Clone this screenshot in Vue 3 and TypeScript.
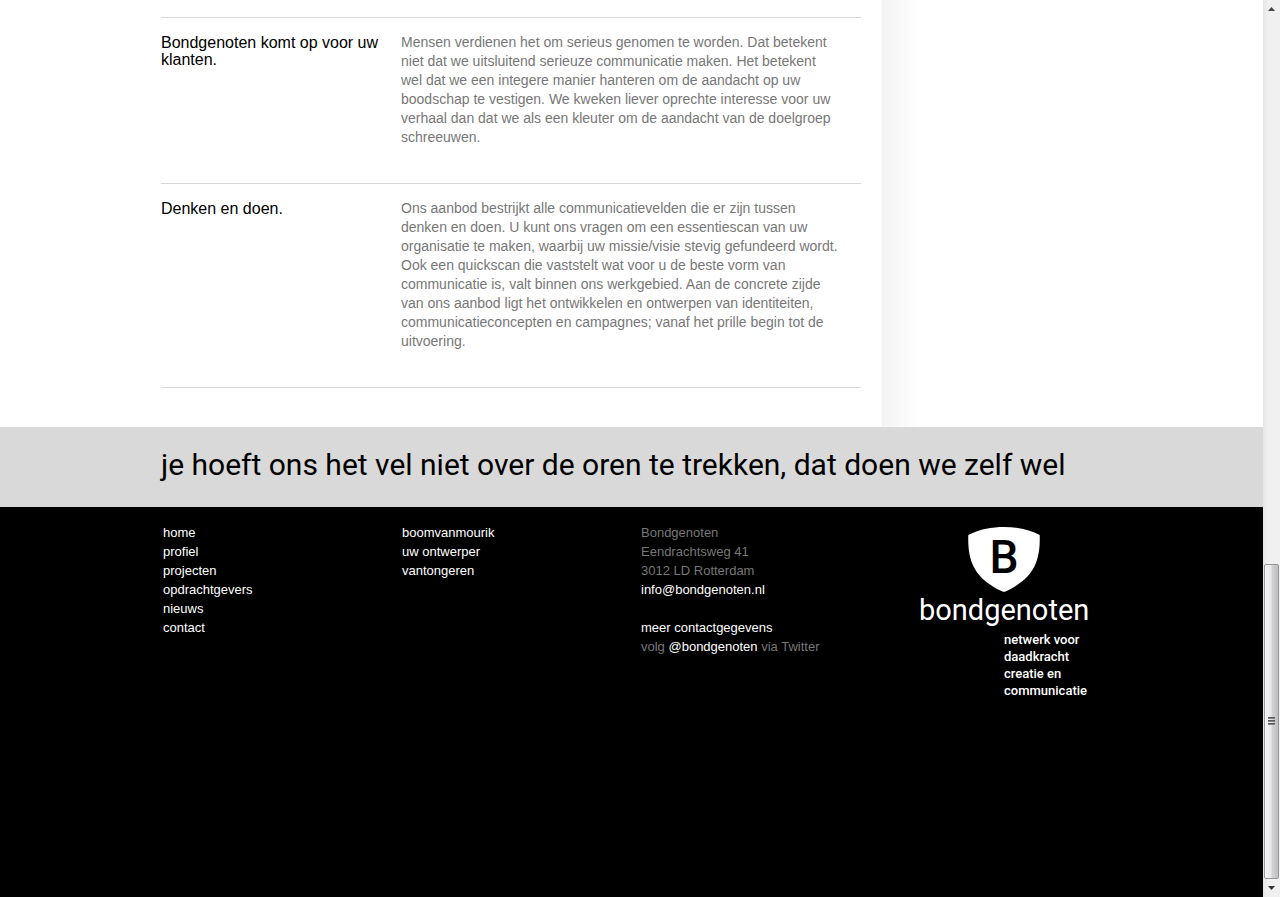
<script setup lang="ts">
interface Statement {
  title: string
  body: string
}

const statements: Statement[] = [
  {
    title: 'Bondgenoten komt op voor uw klanten.',
    body: 'Mensen verdienen het om serieus genomen te worden. Dat betekent niet dat we uitsluitend serieuze communicatie maken. Het betekent wel dat we een integere manier hanteren om de aandacht op uw boodschap te vestigen. We kweken liever oprechte interesse voor uw verhaal dan dat we als een kleuter om de aandacht van de doelgroep schreeuwen.',
  },
  {
    title: 'Denken en doen.',
    body: 'Ons aanbod bestrijkt alle communicatievelden die er zijn tussen denken en doen. U kunt ons vragen om een essentiescan van uw organisatie te maken, waarbij uw missie/visie stevig gefundeerd wordt. Ook een quickscan die vaststelt wat voor u de beste vorm van communicatie is, valt binnen ons werkgebied. Aan de concrete zijde van ons aanbod ligt het ontwikkelen en ontwerpen van identiteiten, communicatieconcepten en campagnes; vanaf het prille begin tot de uitvoering.',
  },
]

const pages: string[] = ['home', 'profiel', 'projecten', 'opdrachtgevers', 'nieuws', 'contact']
const partners: string[] = ['boomvanmourik', 'uw ontwerper', 'vantongeren']
const tagline: string[] = ['netwerk voor', 'daadkracht', 'creatie en', 'communicatie']
</script>

<template>
  <div class="viewport">
    <div class="page">
      <main class="container main">
        <div class="statements">
          <section v-for="item in statements" :key="item.title" class="statement">
            <h2>{{ item.title }}</h2>
            <p>{{ item.body }}</p>
          </section>
        </div>
        <div class="edge"></div>
      </main>

      <div class="band">
        <p class="container slogan">je hoeft ons het vel niet over de oren te trekken, dat doen we zelf wel</p>
      </div>

      <footer class="footer">
        <div class="container columns">
          <nav aria-label="Pagina's">
            <ul>
              <li v-for="name in pages" :key="name"><a href="#">{{ name }}</a></li>
            </ul>
          </nav>
          <nav aria-label="Partners">
            <ul>
              <li v-for="name in partners" :key="name"><a href="#">{{ name }}</a></li>
            </ul>
          </nav>
          <address>
            <p>Bondgenoten<br />Eendrachtsweg 41<br />3012 LD Rotterdam<br /><a href="#">info@bondgenoten.nl</a></p>
            <p><a href="#">meer contactgegevens</a><br />volg <a href="#">@bondgenoten</a> via Twitter</p>
          </address>
          <a href="#" class="logo">
            <svg class="shield" width="72" height="66" viewBox="0 0 72 66" aria-hidden="true">
              <path d="M.3 8C12 2 24 0 36 0S60 2 71.7 8C72.5 34 66 51 38 64.3Q36 65.3 34 64.3C6 51-.5 34 .3 8Z" fill="#fff" />
              <text x="36" y="46" text-anchor="middle">B</text>
            </svg>
            <span class="name">bondgenoten</span>
            <span class="tagline">
              <span v-for="line in tagline" :key="line">{{ line }}</span>
            </span>
          </a>
        </div>
      </footer>
    </div>

    <div class="scrollbar" aria-hidden="true">
      <svg class="arrow" width="7" height="4" viewBox="0 0 7 4"><path d="M0 4L3.5 0L7 4Z" fill="#444" /></svg>
      <div class="track">
        <div class="thumb"><i></i><i></i><i></i></div>
      </div>
      <svg class="arrow" width="7" height="4" viewBox="0 0 7 4"><path d="M0 0L3.5 4L7 0Z" fill="#333" /></svg>
    </div>
  </div>
</template>

<style>
body {
  margin: 0;
  background: #fff;
}
</style>

<style scoped>
.viewport {
  display: flex;
  min-height: 100vh;
  font-family: "Liberation Sans", Arial, sans-serif;
}

.page {
  flex: 1;
  min-width: 0;
  display: flex;
  flex-direction: column;
}

.container {
  width: 100%;
  max-width: 941px;
  margin: 0 auto;
}

.main {
  display: flex;
}

.statements {
  flex: 0 1 700px;
  margin: 17px 21px 39px 0;
  border-bottom: 1px solid #d9d9d9;
}

.statement {
  display: grid;
  grid-template-columns: 240px 1fr;
  padding: 15px 21px 36px 0;
  border-top: 1px solid #d9d9d9;
}

h2 {
  margin: 0;
  padding: 1px 20px 0 0;
  font-size: 16px;
  font-weight: 400;
  line-height: 17px;
  color: #000;
}

.statement p {
  margin: 0;
  font-size: 14px;
  line-height: 19px;
  color: #777;
}

.edge {
  width: 36px;
  background: linear-gradient(to right, #f3f3f3, #f8f8f8 45%, #fff);
}

.band {
  padding-bottom: 4px;
  background: #d9d9d9;
}

.slogan {
  font-family: Roboto, sans-serif;
  font-size: 30px;
  line-height: 76px;
  color: #000;
  white-space: nowrap;
}

.footer {
  flex: 1;
  background: #000;
  color: #777;
  font-size: 13px;
  line-height: 19px;
}

.columns {
  display: grid;
  grid-template-columns: 239px 239px 278px 1fr;
  box-sizing: border-box;
  padding: 16px 0 40px 2px;
}

ul {
  list-style: none;
  margin: 0;
  padding: 0;
}

a {
  color: #fff;
  text-decoration: none;
}

address {
  font-style: normal;
}

address p {
  margin: 0 0 19px;
}

.logo {
  display: flex;
  flex-direction: column;
  width: 170px;
  padding-top: 4px;
  font-family: Roboto, sans-serif;
}

.shield {
  align-self: center;
}

.shield text {
  font-family: Roboto, sans-serif;
  font-size: 46px;
  font-weight: 500;
  fill: #000;
}

.name {
  font-size: 29px;
  line-height: 34px;
}

.tagline {
  display: flex;
  flex-direction: column;
  padding: 4px 0 0 85px;
  font-size: 13px;
  font-weight: 500;
  line-height: 17px;
}

.scrollbar {
  display: flex;
  flex-direction: column;
  align-items: center;
  box-sizing: border-box;
  width: 17px;
  padding: 7px 0;
  background: linear-gradient(to right, #e6e6e6, #f0f0f0 30%, #f0f0f0);
}

.track {
  flex: 1;
  display: flex;
  flex-direction: column;
  justify-content: flex-end;
  width: 15px;
  margin: 6px 0 7px;
}

.thumb {
  display: flex;
  flex-direction: column;
  align-items: center;
  justify-content: center;
  gap: 1px;
  box-sizing: border-box;
  height: 36.6%;
  border: 1px solid #979797;
  border-radius: 2px;
  background: linear-gradient(to right, #f5f5f5, #e9e9eb 45%, #d3d3d6 55%, #bebec2);
}

.thumb i {
  width: 7px;
  height: 2px;
  background: linear-gradient(#444, #999);
}
</style>
